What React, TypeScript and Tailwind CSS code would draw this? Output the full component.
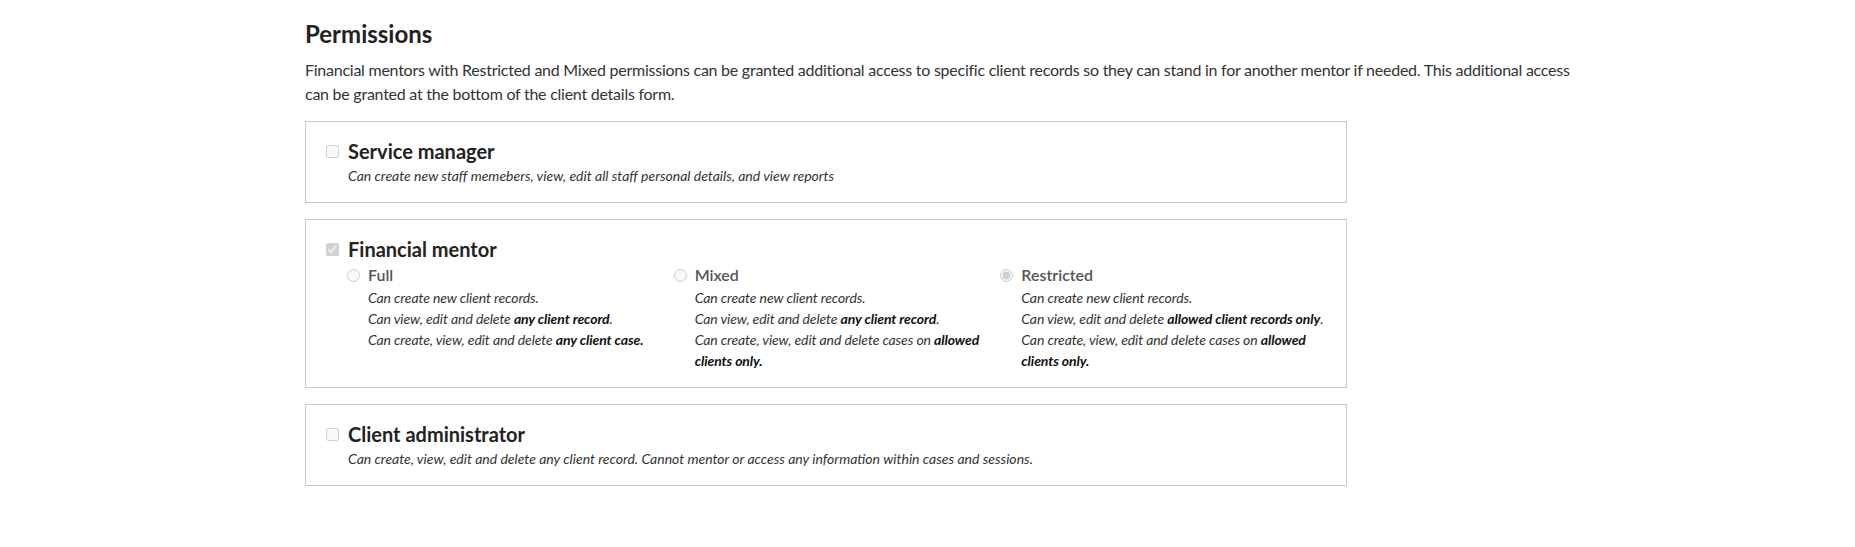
import React from "react";

type Option = {
  label: string;
  checked?: boolean;
  lines: React.ReactNode[];
};

const strong = "font-bold text-[#111]";

const mentorOptions: Option[] = [
  {
    label: "Full",
    lines: [
      "Can create new client records.",
      <>
        Can view, edit and delete <b className={strong}>any client record</b>.
      </>,
      <>
        Can create, view, edit and delete <b className={strong}>any client case.</b>
      </>,
    ],
  },
  {
    label: "Mixed",
    lines: [
      "Can create new client records.",
      <>
        Can view, edit and delete <b className={strong}>any client record</b>.
      </>,
      <>
        Can create, view, edit and delete cases on <b className={strong}>allowed</b>{" "}
        <b className={strong}>clients only.</b>
      </>,
    ],
  },
  {
    label: "Restricted",
    checked: true,
    lines: [
      "Can create new client records.",
      <>
        Can view, edit and delete <b className={strong}>allowed client records only</b>.
      </>,
      <>
        Can create, view, edit and delete cases on <b className={strong}>allowed</b>{" "}
        <b className={strong}>clients only.</b>
      </>,
    ],
  },
];

function RoleHeader({ title, checked }: { title: string; checked?: boolean }) {
  return (
    <label className="flex items-center gap-[9px]">
      <input
        type="checkbox"
        disabled
        readOnly
        checked={!!checked}
        className="m-0 h-[13px] w-[13px]"
      />
      <span className="text-[20px] font-bold leading-[27px] text-[#222]">{title}</span>
    </label>
  );
}

function RoleBox({ children }: { children: React.ReactNode }) {
  return <div className="border border-[#c8c8c8] px-5 py-4">{children}</div>;
}

export default function App() {
  return (
    <div className="min-h-[547px] bg-white pl-[305px] pt-[19px] [font-family:Lato,'Open_Sans',sans-serif]">
      <h2 className="text-[24px] font-bold leading-[29px] text-[#222]">Permissions</h2>
      <p className="mt-[10px] w-[1280px] text-[16px] leading-[23.5px] tracking-[-0.25px] text-[#333]">
        Financial mentors with Restricted and Mixed permissions can be granted additional access to
        specific client records so they can stand in for another mentor if needed. This additional
        access can be granted at the bottom of the client details form.
      </p>

      <div className="mt-4 flex w-[1042px] flex-col gap-[16px]">
        <RoleBox>
          <RoleHeader title="Service manager" />
          <p className="pl-[22px] text-[14px] italic leading-[21px] text-[#333]">
            Can create new staff memebers, view, edit all staff personal details, and view reports
          </p>
        </RoleBox>

        <RoleBox>
          <RoleHeader title="Financial mentor" checked />
          <div className="ml-[21px] grid w-[980px] grid-cols-3">
            {mentorOptions.map((opt) => (
              <div key={opt.label}>
                <label className="flex items-center gap-2">
                  <input
                    type="radio"
                    name="mentor"
                    disabled
                    readOnly
                    checked={!!opt.checked}
                    className="m-0 h-[13px] w-[13px]"
                  />
                  <span className="text-[16px] font-semibold leading-[24px] text-[#555]">
                    {opt.label}
                  </span>
                </label>
                <div className="pl-[21px] text-[14px] italic leading-[21px] tracking-[-0.1px] text-[#333]">
                  {opt.lines.map((line, i) => (
                    <p key={i}>{line}</p>
                  ))}
                </div>
              </div>
            ))}
          </div>
        </RoleBox>

        <RoleBox>
          <RoleHeader title="Client administrator" />
          <p className="pl-[22px] text-[14px] italic leading-[21px] text-[#333]">
            Can create, view, edit and delete any client record. Cannot mentor or access any
            information within cases and sessions.
          </p>
        </RoleBox>
      </div>
    </div>
  );
}
